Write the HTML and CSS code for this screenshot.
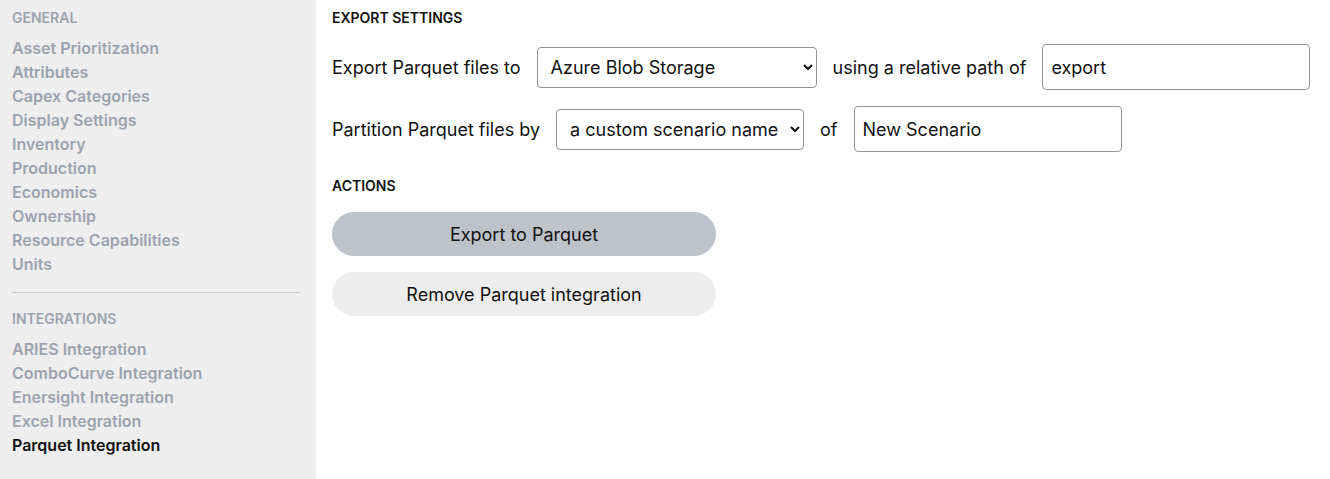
FILE: index.html
```html
<!DOCTYPE html>
<html lang="en">
<head>
  <meta charset="UTF-8" />
  <title>Parquet Integration</title>
  <link rel="stylesheet" href="styles.css">
</head>
<body>
  <nav class="sidebar">
    <div class="nav-heading">General</div>
    <ul class="nav-list">
      <li><a href="#">Asset Prioritization</a></li>
      <li><a href="#">Attributes</a></li>
      <li><a href="#">Capex Categories</a></li>
      <li><a href="#">Display Settings</a></li>
      <li><a href="#">Inventory</a></li>
      <li><a href="#">Production</a></li>
      <li><a href="#">Economics</a></li>
      <li><a href="#">Ownership</a></li>
      <li><a href="#">Resource Capabilities</a></li>
      <li><a href="#">Units</a></li>
    </ul>
    <hr class="divider" />
    <div class="nav-heading">Integrations</div>
    <ul class="nav-list">
      <li><a href="#">ARIES Integration</a></li>
      <li><a href="#">ComboCurve Integration</a></li>
      <li><a href="#">Enersight Integration</a></li>
      <li><a href="#">Excel Integration</a></li>
      <li><a href="#" class="active">Parquet Integration</a></li>
    </ul>
  </nav>

  <main class="content">
    <h2 class="section-title">Export Settings</h2>
    <div class="form-row">
      <label for="dest">Export Parquet files to</label>
      <select id="dest" class="select select-dest">
        <option>Azure Blob Storage</option>
        <option>Amazon S3</option>
        <option>Local Folder</option>
      </select>
      <span>using a relative path of</span>
      <input type="text" class="text-input" value="export" />
    </div>
    <div class="form-row">
      <label for="part">Partition Parquet files by</label>
      <select id="part" class="select select-part">
        <option>a custom scenario name</option>
        <option>the scenario id</option>
      </select>
      <span>of</span>
      <input type="text" class="text-input" value="New Scenario" />
    </div>

    <h2 class="section-title actions-title">Actions</h2>
    <div class="actions">
      <button class="btn btn-primary">Export to Parquet</button>
      <button class="btn btn-secondary">Remove Parquet integration</button>
    </div>
  </main>
</body>
</html>
```

FILE: styles.css
```css
* {
  box-sizing: border-box;
}

body {
  margin: 0;
  display: flex;
  min-height: 100vh;
  font-family: Inter, 'Noto Sans', sans-serif;
  color: #111;
  background: #fff;
}

.sidebar {
  width: 316px;
  flex-shrink: 0;
  background-color: #eee;
  padding: 10px 16px 0 12px;
}

.nav-heading {
  font-size: 14px;
  line-height: 16px;
  font-weight: 600;
  text-transform: uppercase;
  color: #9ca3af;
}

.nav-list {
  list-style: none;
  margin: 10px 0 0;
  padding: 0;
}

.nav-list a {
  display: block;
  font-size: 16px;
  line-height: 24px;
  font-weight: 600;
  color: #9ca3af;
  text-decoration: none;
}

.nav-list a.active {
  color: #111;
}

.divider {
  border: 0;
  border-top: 1px solid #c9ced6;
  margin: 16px 0 18px;
}

.content {
  flex: 1;
  padding: 10px 16px;
}

.section-title {
  margin: 0;
  font-size: 14px;
  line-height: 16px;
  font-weight: 600;
  text-transform: uppercase;
  color: #111;
}

.actions-title {
  margin-top: 26px;
}

.form-row {
  display: flex;
  align-items: center;
  gap: 16px;
  margin-top: 16px;
  font-size: 18px;
}

.section-title + .form-row {
  margin-top: 18px;
}

.select {
  height: 41px;
  font-family: inherit;
  font-size: 18px;
  color: #111;
  background: #fff;
  border: 1px solid #8f939c;
  border-radius: 4px;
  padding: 0 6px 0 9px;
}

.select-dest {
  width: 280px;
}

.select-part {
  width: 248px;
}

.text-input {
  width: 268px;
  height: 46px;
  font-family: inherit;
  font-size: 18px;
  color: #111;
  border: 1px solid #8f939c;
  border-radius: 4px;
  padding: 0 8px;
}

.actions {
  display: flex;
  flex-direction: column;
  gap: 16px;
  margin-top: 18px;
}

.btn {
  width: 384px;
  height: 44px;
  border: 0;
  border-radius: 22px;
  font-family: inherit;
  font-size: 18px;
  color: #111;
  cursor: pointer;
}

.btn-primary {
  background-color: #bec2ca;
}

.btn-secondary {
  background-color: #ededed;
}
```
